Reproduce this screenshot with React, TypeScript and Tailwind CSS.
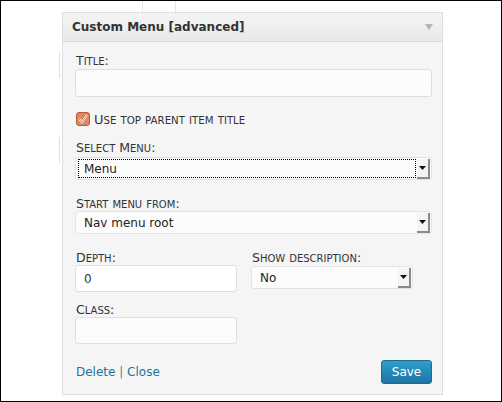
import React from "react";

const font = { fontFamily: "'DejaVu Sans', 'Liberation Sans', sans-serif" };

// hand-rolled small caps: originally upper-case letters at full size, the rest shrunk
const SmallCaps = ({ text, big, small }: { text: string; big: string; small: string }) => {
  const runs: { s: string; up: boolean }[] = [];
  for (const ch of text) {
    const up = !(ch >= "a" && ch <= "z");
    const last = runs[runs.length - 1];
    if (last && last.up === up) last.s += ch;
    else runs.push({ s: ch, up });
  }
  return (
    <>
      {runs.map((r, i) =>
        r.up ? (
          <span key={i} className={big}>
            {r.s}
          </span>
        ) : (
          <span key={i} className={`${small} uppercase`}>
            {r.s}
          </span>
        )
      )}
    </>
  );
};

const Label = ({ text, className = "" }: { text: string; className?: string }) => (
  <div className={`h-4 leading-4 text-[#333] ${className}`}>
    <SmallCaps text={text} big="text-[12.5px]" small="text-[10px]" />
  </div>
);

const SelectBox = ({ value, focused = false, className = "" }: { value: string; focused?: boolean; className?: string }) => (
  <div className={`flex h-[23px] items-center rounded-[3px] border border-[#e3e3e3] bg-[#fcfcfc] pl-[2px] pr-[1px] ${className}`}>
    <div
      className={`flex h-[19px] flex-1 items-center pl-[5px] text-[12px] text-[#222] ${
        focused ? "border border-dotted border-black" : "border border-transparent"
      }`}
    >
      {value}
    </div>
    <div className="ml-[1px] flex h-[20px] w-[13px] items-center justify-center border-b-2 border-r-2 border-b-[#8a8a8a] border-r-[#8a8a8a] bg-[#f4f4f4]">
      <svg width="7" height="4" viewBox="0 0 7 4">
        <path d="M0 0 H7 L3.5 4 Z" fill="#111" />
      </svg>
    </div>
  </div>
);

export default function App() {
  return (
    <div className="box-border h-[402px] w-[502px] overflow-hidden border border-black bg-white" style={font}>
      {/* faint page behind the widget */}
      <div className="flex h-[11px]">
        <div className="ml-[141px] w-px bg-[#e6e6e6]" />
        <div className="ml-[32px] w-px bg-[#e6e6e6]" />
      </div>
      <div className="flex">
        <div className="ml-[58px] mt-[40px] flex w-[2px] flex-col gap-[59px]">
          <div className="h-[26px] border-l border-[#e0e0e0]" />
          <div className="h-[26px] border-l border-[#e0e0e0]" />
        </div>
        <div className="ml-[1px] w-[381px] border border-[#dfdfdf] bg-[#f5f5f5]">
          <div className="flex h-[29px] items-center justify-between border-b border-[#dcdcdc] bg-gradient-to-b from-[#f4f4f4] to-[#e9e9e9] pl-[9px] pr-[9px]">
            <span className="text-[12px] font-bold text-[#333]">Custom Menu [advanced]</span>
            <svg width="8" height="6" viewBox="0 0 8 6">
              <path d="M0 0 H8 L4 6 Z" fill="#b5b5b5" />
            </svg>
          </div>
          <div className="pb-[10px] pl-[12px] pr-[10px]">
            <Label text="Title:" className="ml-[1px] mt-[10px]" />
            <div className="mt-[1px] h-[28px] rounded-[3px] border border-[#dfdfdf] bg-[#fbfbfb]" />

            <div className="ml-[1px] mt-[14px] flex items-center gap-[4px]">
              <svg width="14" height="14" viewBox="0 0 14 14">
                <rect x="0.5" y="0.5" width="13" height="13" rx="2.5" fill="#e4855c" stroke="#b65a34" />
                <path d="M3 7 L6 10.2 L11 3.2" fill="none" stroke="#fff" strokeWidth="2" />
                <path d="M3 7 L6 10.2 L11 3.2" fill="none" stroke="#7a3b20" strokeWidth="0.6" />
              </svg>
              <div className="h-4 leading-4 text-[#333]">
                <SmallCaps text="Use top parent item title" big="text-[13px]" small="text-[10.2px]" />
              </div>
            </div>

            <Label text="Select Menu:" className="ml-[1px] mt-[12px]" />
            <SelectBox value="Menu" focused className="mt-[2px]" />

            <Label text="Start menu from:" className="ml-[1px] mt-[15px]" />
            <SelectBox value="Nav menu root" className="mt-0" />

            <div className="mt-[15px] flex gap-[14px]">
              <div className="w-[162px]">
                <Label text="Depth:" className="ml-[1px]" />
                <div className="flex h-[27px] items-center rounded-[3px] border border-[#dfdfdf] bg-white pl-[8px] text-[12px] text-[#333]">
                  0
                </div>
                <Label text="Class:" className="ml-[1px] mt-[9px]" />
                <div className="h-[27px] rounded-[3px] border border-[#dfdfdf] bg-[#fbfbfb]" />
              </div>
              <div className="w-[162px]">
                <Label text="Show description:" className="ml-[1px]" />
                <SelectBox value="No" className="mt-[1px]" />
              </div>
            </div>

            <div className="mt-[16px] flex items-center justify-between">
              <div className="ml-[1px] text-[12px] text-[#21759b]">
                Delete <span className="text-[#777]">|</span> Close
              </div>
              <button className="h-[24px] w-[51px] rounded-[3px] border border-[#1f6a8e] bg-gradient-to-b from-[#2e9fd2] to-[#1e74a0] text-[12px] text-white">
                Save
              </button>
            </div>
          </div>
        </div>
      </div>
    </div>
  );
}
